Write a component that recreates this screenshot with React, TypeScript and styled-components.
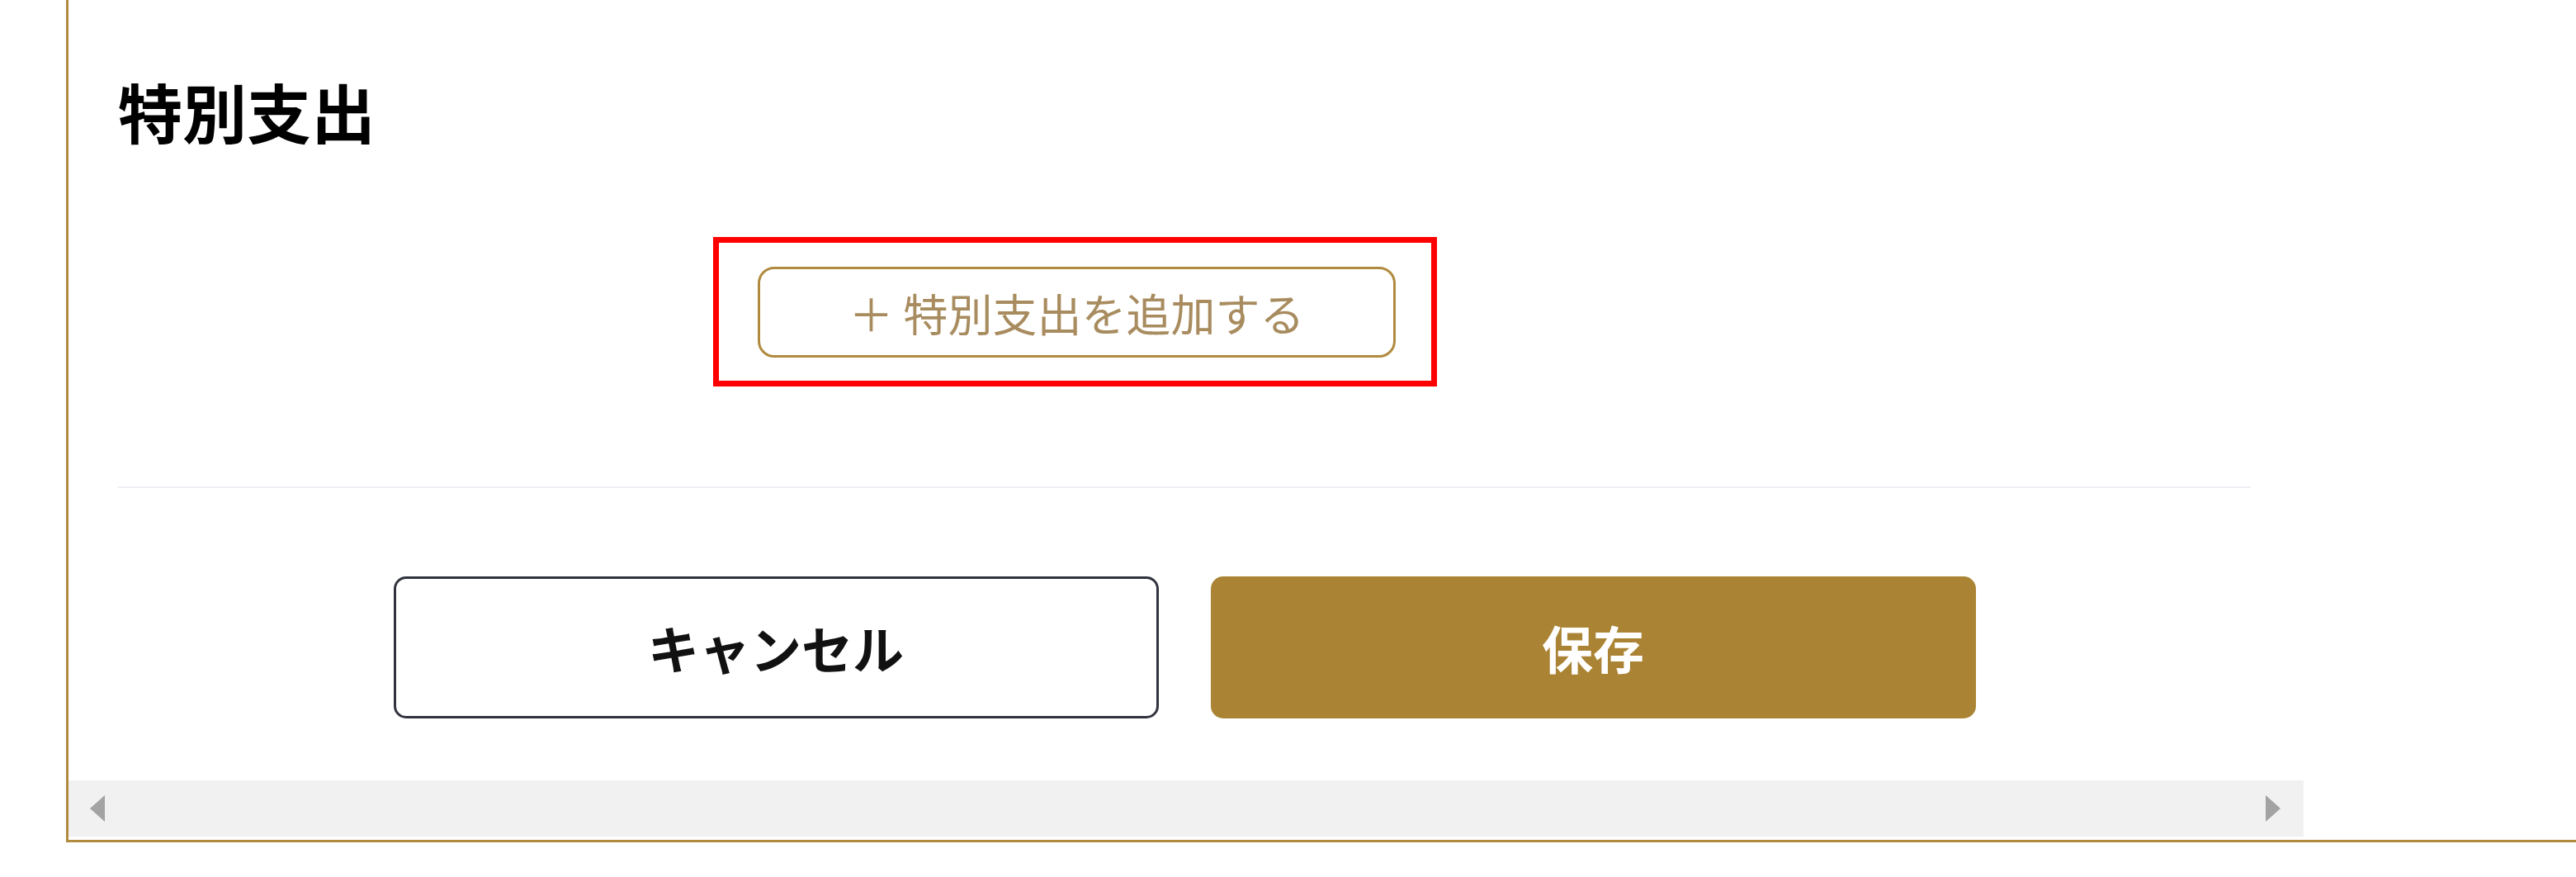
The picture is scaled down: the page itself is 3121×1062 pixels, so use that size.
import React from 'react'
import styled, { createGlobalStyle } from 'styled-components'

const GOLD = '#b08b3f'

const GlobalStyle = createGlobalStyle`
  html, body {
    margin: 0;
    padding: 0;
    background: #ffffff;
  }
  body {
    font-family: "Noto Sans CJK JP", "Noto Sans", sans-serif;
  }
`

const Page = styled.div`
  width: 3121px;
  height: 1062px;
  overflow: hidden;
  background: #ffffff;
`

const Frame = styled.div`
  margin-left: 80px;
  width: 3100px;
  border-left: 3px solid ${GOLD};
  border-bottom: 3px solid ${GOLD};
  padding-bottom: 4px;
`

const Scroller = styled.div`
  width: 2708px;
  display: flex;
  flex-direction: column;
`

const Content = styled.div`
  width: 2584px;
  padding: 95px 0 75px 60px;
  display: flex;
  flex-direction: column;
`

const Title = styled.h2`
  margin: 0;
  font-size: 78px;
  line-height: 1;
  font-weight: 700;
  color: #000000;
`

const AddRow = styled.div`
  display: flex;
  margin-top: 114px;
  padding-left: 721px;
`

const Highlight = styled.div`
  border: 7px solid #ff0000;
  padding: 29px 43px 28px 47px;
`

const AddButton = styled.button`
  width: 773px;
  height: 110px;
  box-sizing: border-box;
  display: flex;
  align-items: center;
  justify-content: center;
  background: #ffffff;
  border: 3px solid ${GOLD};
  border-radius: 20px;
  font-family: inherit;
  font-size: 54px;
  font-weight: 400;
  color: #a88c5f;
  padding: 0;
  cursor: pointer;
`

const Divider = styled.hr`
  margin: 121px 0 0;
  border: none;
  height: 2px;
  background: #eef0f6;
`

const Actions = styled.div`
  margin-top: 107px;
  display: flex;
  justify-content: center;
  gap: 63px;
`

const ActionButton = styled.button<{ $primary?: boolean }>`
  width: 927px;
  height: 172px;
  box-sizing: border-box;
  display: flex;
  align-items: center;
  justify-content: center;
  border-radius: 15px;
  font-family: inherit;
  font-size: 62px;
  font-weight: 700;
  padding: 0;
  cursor: pointer;
  background: ${p => (p.$primary ? '#aa8434' : '#ffffff')};
  color: ${p => (p.$primary ? '#ffffff' : '#111111')};
  border: ${p => (p.$primary ? 'none' : '3px solid #30333d')};
`

const ScrollTrack = styled.div`
  height: 68px;
  background: #f1f1f1;
  display: flex;
  align-items: center;
  justify-content: space-between;
  padding: 0 28px 0 26px;
`

const Arrow = ({ dir }: { dir: 'left' | 'right' }) => (
  <svg width="18" height="32" viewBox="0 0 18 32">
    <polygon
      points={dir === 'left' ? '18,0 18,32 0,16' : '0,0 0,32 18,16'}
      fill="#a3a3a3"
    />
  </svg>
)

const App = () => {
  return (
    <Page>
      <GlobalStyle />
      <Frame>
        <Scroller>
          <Content>
            <Title>特別支出</Title>
            <AddRow>
              <Highlight>
                <AddButton type="button">＋ 特別支出を追加する</AddButton>
              </Highlight>
            </AddRow>
            <Divider />
            <Actions>
              <ActionButton type="button">キャンセル</ActionButton>
              <ActionButton type="button" $primary>
                保存
              </ActionButton>
            </Actions>
          </Content>
          <ScrollTrack>
            <Arrow dir="left" />
            <Arrow dir="right" />
          </ScrollTrack>
        </Scroller>
      </Frame>
    </Page>
  )
}

export default App
